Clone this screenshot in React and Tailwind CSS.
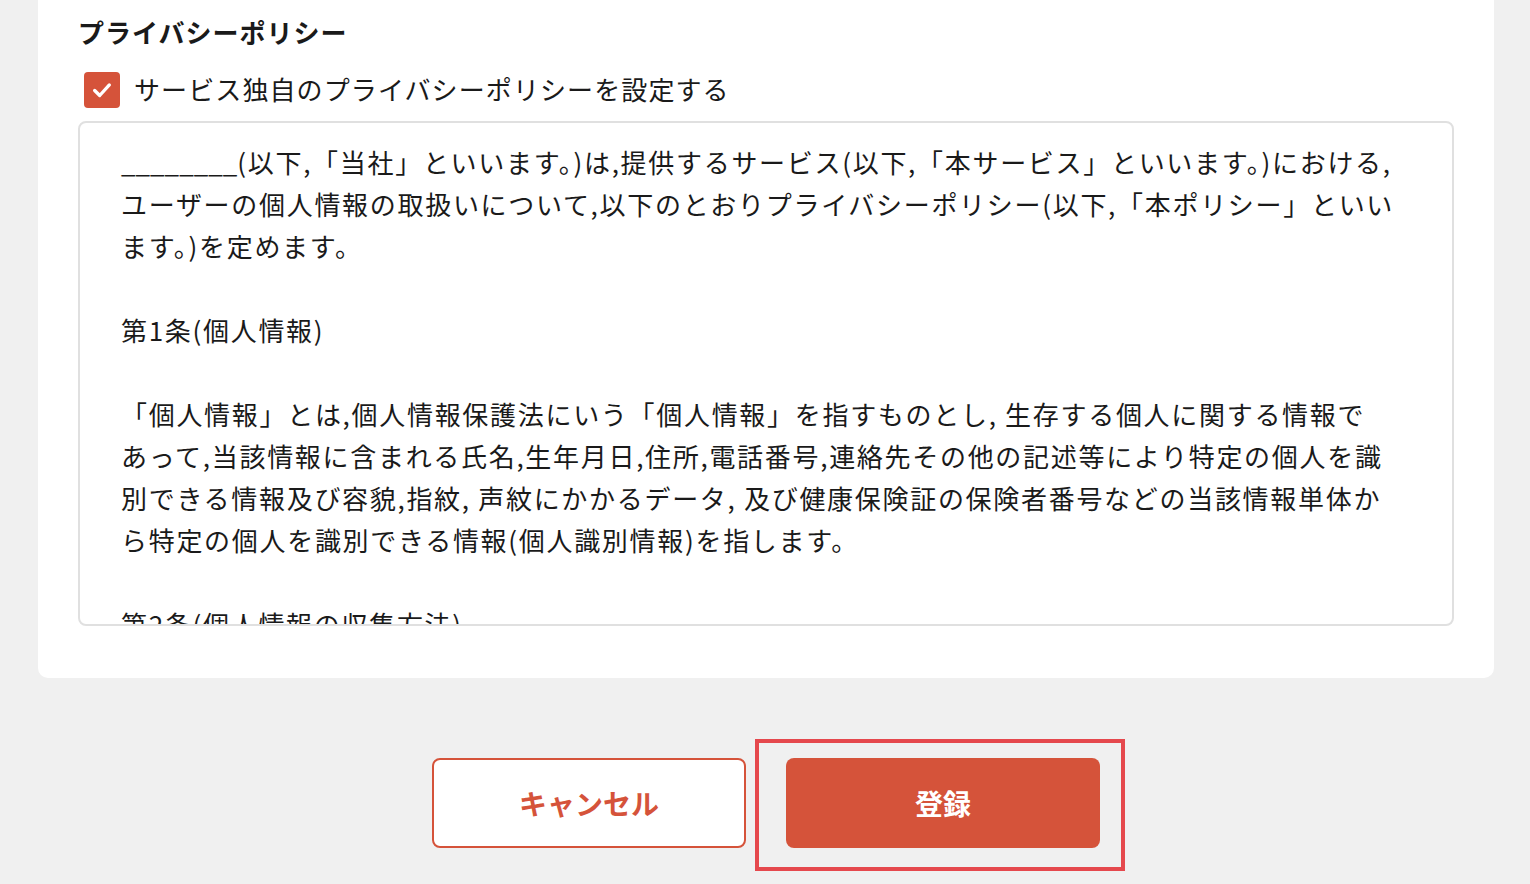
import React from 'react';

const policyLines = [
  '(以下,「当社」といいます。)は,提供するサービス(以下,「本サービス」といいます。)における,',
  'ユーザーの個人情報の取扱いについて,以下のとおりプライバシーポリシー(以下,「本ポリシー」といい',
  'ます。)を定めます。',
  '',
  '第1条(個人情報)',
  '',
  '「個人情報」とは,個人情報保護法にいう「個人情報」を指すものとし, 生存する個人に関する情報で',
  'あって,当該情報に含まれる氏名,生年月日,住所,電話番号,連絡先その他の記述等により特定の個人を識',
  '別できる情報及び容貌,指紋, 声紋にかかるデータ, 及び健康保険証の保険者番号などの当該情報単体か',
  'ら特定の個人を識別できる情報(個人識別情報)を指します。',
  '',
  '第2条(個人情報の収集方法)',
];

export default function App() {
  return (
    <div
      className="min-h-screen bg-[#f0f0f0] text-[#1a1a1a] overflow-hidden"
      style={{ fontFamily: '"Noto Sans CJK JP", "Noto Sans", sans-serif' }}
    >
      <div className="ml-[38px] mr-[36px] bg-white rounded-b-[10px] px-[40px] pt-[14px] pb-[52px]">
        <h2 className="text-[26px] leading-[36px] font-bold tracking-[1px]">プライバシーポリシー</h2>

        <label className="mt-[22px] ml-[6px] flex items-center gap-[14px] cursor-pointer">
          <span className="w-[36px] h-[36px] rounded-[4px] bg-[#d5533a] flex items-center justify-center">
            <svg width="22" height="22" viewBox="0 0 24 24" fill="none" stroke="white" strokeWidth="3.6" strokeLinecap="round" strokeLinejoin="round">
              <polyline points="4 12.5 9.5 18 20 6.5" />
            </svg>
          </span>
          <span className="text-[26px] leading-[34px] tracking-[1.1px] -mt-[2px]">サービス独自のプライバシーポリシーを設定する</span>
        </label>

        <div className="mt-[13px] h-[505px] border-2 border-[#e0e0e0] rounded-[8px] overflow-hidden pl-[41px] pr-[40px] pt-[18px]">
          {policyLines.map((line, i) => (
            <div key={i} className="text-[26px] leading-[42px] h-[42px] whitespace-nowrap tracking-[1.7px]">
              {i === 0 && <span className="tracking-normal">________</span>}
              {line}
            </div>
          ))}
        </div>
      </div>

      <div className="mt-[80px] ml-[2px] flex justify-center gap-[40px]">
        <button className="w-[314px] h-[90px] rounded-[8px] border-2 border-[#d5533a] bg-white text-[#d5533a] text-[28px] font-bold">
          キャンセル
        </button>
        <div className="relative">
          <button className="w-[314px] h-[90px] rounded-[8px] bg-[#d5533a] text-white text-[28px] font-bold">
            登録
          </button>
          <div className="absolute -left-[31px] -right-[25px] -top-[19px] -bottom-[23px] border-[4px] border-[#e5484d] pointer-events-none" />
        </div>
      </div>
    </div>
  );
}
